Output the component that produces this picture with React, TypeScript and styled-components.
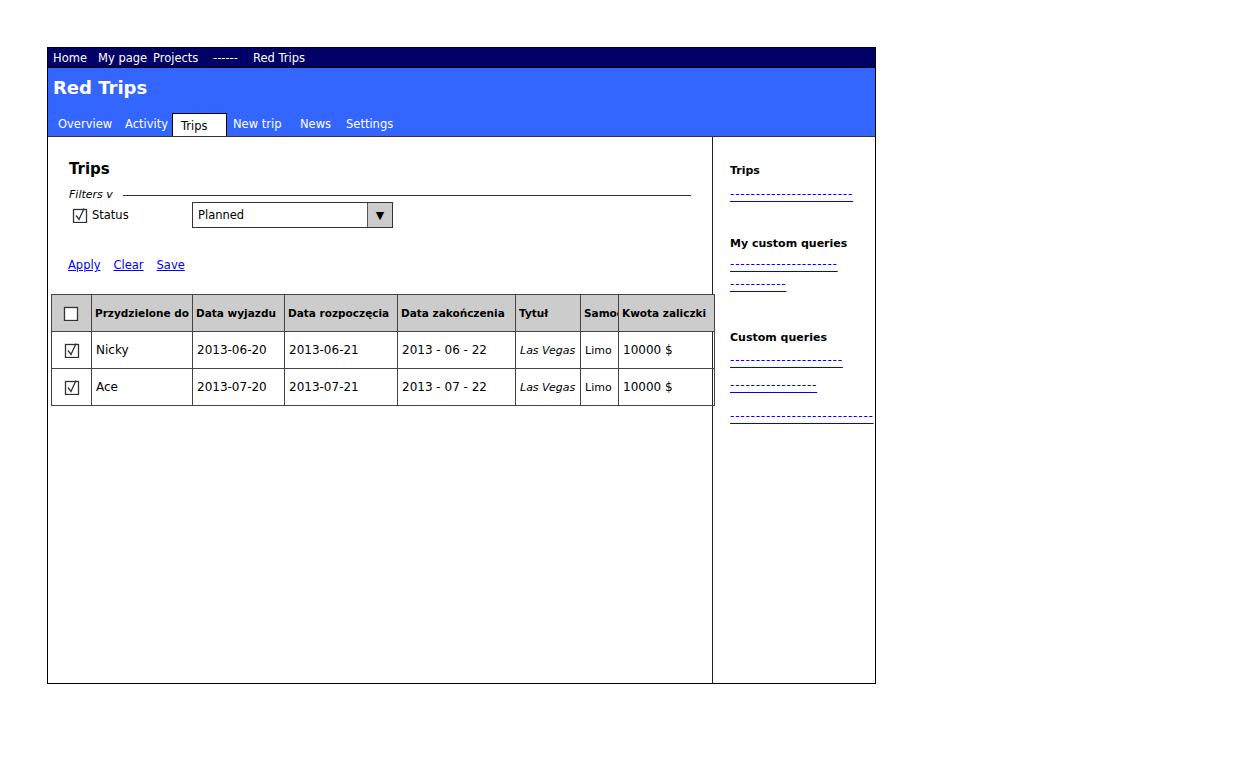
import styled, { createGlobalStyle } from "styled-components";

const GlobalStyle = createGlobalStyle`
  body {
    margin: 0;
    background: #fff;
    font-family: "Comic Sans MS", "DejaVu Sans", sans-serif;
    color: #000;
  }
`;

interface WidthProps {
  $w?: number;
}

const Page = styled.div`
  padding: 47px 0 0 47px;
`;

const Frame = styled.div`
  width: 827px;
  height: 635px;
  border: 1px solid #000;
  display: flex;
  flex-direction: column;
`;

const TopBar = styled.nav`
  display: flex;
  align-items: center;
  height: 19px;
  padding-left: 5px;
  background: #000066;
  border-bottom: 1px solid #000;
  color: #fff;
  font-size: 11.5px;
`;

const TopItem = styled.span<WidthProps>`
  flex: 0 0 ${(p) => (p.$w ? `${p.$w}px` : "auto")};
  white-space: nowrap;
`;

const Header = styled.header`
  display: flex;
  flex-direction: column;
  justify-content: space-between;
  height: 68px;
  background: #3366ff;
  border-bottom: 1px solid #333;
`;

const Title = styled.h1`
  margin: 0;
  padding: 9px 0 0 5px;
  color: #fff;
  font-size: 18px;
  font-weight: 700;
`;

const Tabs = styled.div`
  display: flex;
  align-items: flex-end;
  padding-left: 10px;
  height: 23px;
`;

const Tab = styled.span<WidthProps & { $active?: boolean }>`
  flex: 0 0 ${(p) => (p.$w ? `${p.$w}px` : "auto")};
  box-sizing: border-box;
  height: ${(p) => (p.$active ? "23px" : "auto")};
  padding: ${(p) => (p.$active ? "5px 0 0 8px" : "0 0 5px 0")};
  margin-right: ${(p) => (p.$active ? "6px" : "0")};
  background: ${(p) => (p.$active ? "#fff" : "transparent")};
  border: ${(p) => (p.$active ? "1px solid #000" : "none")};
  border-bottom: none;
  color: ${(p) => (p.$active ? "#000" : "#fff")};
  font-size: 11.5px;
  white-space: nowrap;
`;

const Body = styled.div`
  flex: 1;
  display: grid;
  grid-template-columns: 665px 1fr;
`;

const Main = styled.main`
  border-right: 1px solid #222;
  padding: 0 21px 0 0;
`;

const Section = styled.div`
  padding-left: 21px;
`;

const PageTitle = styled.h2`
  margin: 22px 0 0;
  font-size: 15px;
  font-weight: 700;
  line-height: 20px;
`;

const FiltersRow = styled.div`
  display: flex;
  align-items: center;
  gap: 10px;
  margin-top: 8px;
  height: 14px;
`;

const FiltersLabel = styled.span`
  font-size: 11px;
  font-style: italic;
`;

const Rule = styled.div`
  flex: 1;
  height: 0;
  border-top: 1.5px solid #333;
  margin-top: 3px;
`;

const StatusRow = styled.div`
  display: flex;
  align-items: center;
  margin-top: 1px;
  height: 26px;
`;

const StatusLabel = styled.label`
  display: flex;
  align-items: center;
  gap: 4px;
  width: 120px;
  padding-left: 3px;
  font-size: 11.5px;
`;

const Select = styled.div`
  display: flex;
  width: 199px;
  height: 24px;
  border: 1px solid #333;
  font-size: 11.5px;
`;

const SelectValue = styled.span`
  flex: 1;
  display: flex;
  align-items: center;
  padding-left: 5px;
`;

const SelectArrow = styled.span`
  display: flex;
  align-items: center;
  justify-content: center;
  width: 24px;
  background: #cccccc;
  border-left: 1px solid #555;
  font-size: 11px;
`;

const Links = styled.div`
  display: flex;
  gap: 13px;
  margin-top: 30px;
  margin-left: -1px;
`;

const Link = styled.a`
  color: #0000ff;
  text-decoration: underline;
  font-size: 11.5px;
`;

const TableWrap = styled.div`
  margin: 22px 0 0 3px;
  width: 663px;
`;

const Table = styled.table`
  width: 663px;
  border-collapse: collapse;
  table-layout: fixed;
  border: 1px solid #222;
`;

const Th = styled.th`
  height: 36px;
  padding: 0 0 0 3px;
  background: #cccccc;
  border: 1px solid #444;
  font-size: 10.5px;
  font-weight: 700;
  text-align: left;
`;

const Clip = styled.div`
  overflow: hidden;
  white-space: nowrap;
  text-overflow: clip;
`;

const Td = styled.td<{ $small?: boolean; $italic?: boolean }>`
  height: 36px;
  padding: 0 0 0 4px;
  border: 1px solid #444;
  font-size: ${(p) => (p.$small ? "11px" : "12px")};
  font-style: ${(p) => (p.$italic ? "italic" : "normal")};
  white-space: nowrap;
  overflow: hidden;
`;

const CheckCell = styled.div`
  display: flex;
  justify-content: center;
  padding-right: 4px;
`;

const BoxSvg = styled.svg`
  display: block;
  flex: 0 0 auto;
`;

const Sidebar = styled.aside`
  padding: 27px 0 0 17px;
`;

const SideTitle = styled.h3<{ $top: number }>`
  margin: ${(p) => p.$top}px 0 0;
  font-size: 11px;
  font-weight: 700;
  line-height: 14px;
`;

const SideLink = styled.a<{ $top: number }>`
  display: block;
  margin-top: ${(p) => p.$top}px;
  color: #0000ff;
  text-decoration: underline #0000ff;
  text-decoration-thickness: 1px;
  text-underline-offset: 3px;
  font-size: 12px;
  line-height: 14px;
  letter-spacing: 0.8px;
  white-space: nowrap;
`;

function Check({ checked }: { checked?: boolean }) {
  return (
    <BoxSvg width="16" height="16" viewBox="0 0 16 16">
      <rect x="1.5" y="2.5" width="13" height="13" fill="#fff" stroke="#333" strokeWidth="1.3" />
      {checked && (
        <path d="M4 8.5 L7 12.5 L12 1.5" fill="none" stroke="#333" strokeWidth="1.3" />
      )}
    </BoxSvg>
  );
}

const columns = [40, 101, 92, 113, 118, 65, 38, 96];

const headers = [
  "Przydzielone do",
  "Data wyjazdu",
  "Data rozpoczęcia",
  "Data zakończenia",
  "Tytuł",
  "Samochód",
  "Kwota zaliczki",
];

const rows = [
  { name: "Nicky", out: "2013-06-20", start: "2013-06-21", end: "2013 - 06 - 22" },
  { name: "Ace", out: "2013-07-20", start: "2013-07-21", end: "2013 - 07 - 22" },
];

export default function App() {
  return (
    <Page>
      <GlobalStyle />
      <Frame>
        <TopBar>
          <TopItem $w={45}>Home</TopItem>
          <TopItem $w={55}>My page</TopItem>
          <TopItem $w={60}>Projects</TopItem>
          <TopItem $w={40}>------</TopItem>
          <TopItem>Red Trips</TopItem>
        </TopBar>
        <Header>
          <Title>Red Trips</Title>
          <Tabs>
            <Tab $w={67}>Overview</Tab>
            <Tab $w={47}>Activity</Tab>
            <Tab $w={55} $active>Trips</Tab>
            <Tab $w={67}>New trip</Tab>
            <Tab $w={46}>News</Tab>
            <Tab>Settings</Tab>
          </Tabs>
        </Header>
        <Body>
          <Main>
            <Section>
              <PageTitle>Trips</PageTitle>
              <FiltersRow>
                <FiltersLabel>Filters v</FiltersLabel>
                <Rule />
              </FiltersRow>
              <StatusRow>
                <StatusLabel>
                  <Check checked />
                  Status
                </StatusLabel>
                <Select>
                  <SelectValue>Planned</SelectValue>
                  <SelectArrow>▼</SelectArrow>
                </Select>
              </StatusRow>
              <Links>
                <Link>Apply</Link>
                <Link>Clear</Link>
                <Link>Save</Link>
              </Links>
            </Section>
            <TableWrap>
              <Table>
                <colgroup>
                  {columns.map((w, i) => (
                    <col key={i} style={{ width: w }} />
                  ))}
                </colgroup>
                <thead>
                  <tr>
                    <Th>
                      <CheckCell>
                        <Check />
                      </CheckCell>
                    </Th>
                    {headers.map((h) => (
                      <Th key={h}>
                        <Clip>{h}</Clip>
                      </Th>
                    ))}
                  </tr>
                </thead>
                <tbody>
                  {rows.map((r) => (
                    <tr key={r.name}>
                      <Td>
                        <CheckCell>
                          <Check checked />
                        </CheckCell>
                      </Td>
                      <Td>{r.name}</Td>
                      <Td>{r.out}</Td>
                      <Td>{r.start}</Td>
                      <Td>{r.end}</Td>
                      <Td $small $italic>Las Vegas</Td>
                      <Td $small>Limo</Td>
                      <Td>10000 $</Td>
                    </tr>
                  ))}
                </tbody>
              </Table>
            </TableWrap>
          </Main>
          <Sidebar>
            <SideTitle $top={0}>Trips</SideTitle>
            <SideLink $top={9}>------------------------</SideLink>
            <SideTitle $top={36}>My custom queries</SideTitle>
            <SideLink $top={6}>---------------------</SideLink>
            <SideLink $top={6}>-----------</SideLink>
            <SideTitle $top={40}>Custom queries</SideTitle>
            <SideLink $top={8}>----------------------</SideLink>
            <SideLink $top={11}>-----------------</SideLink>
            <SideLink $top={17}>----------------------------</SideLink>
          </Sidebar>
        </Body>
      </Frame>
    </Page>
  );
}
